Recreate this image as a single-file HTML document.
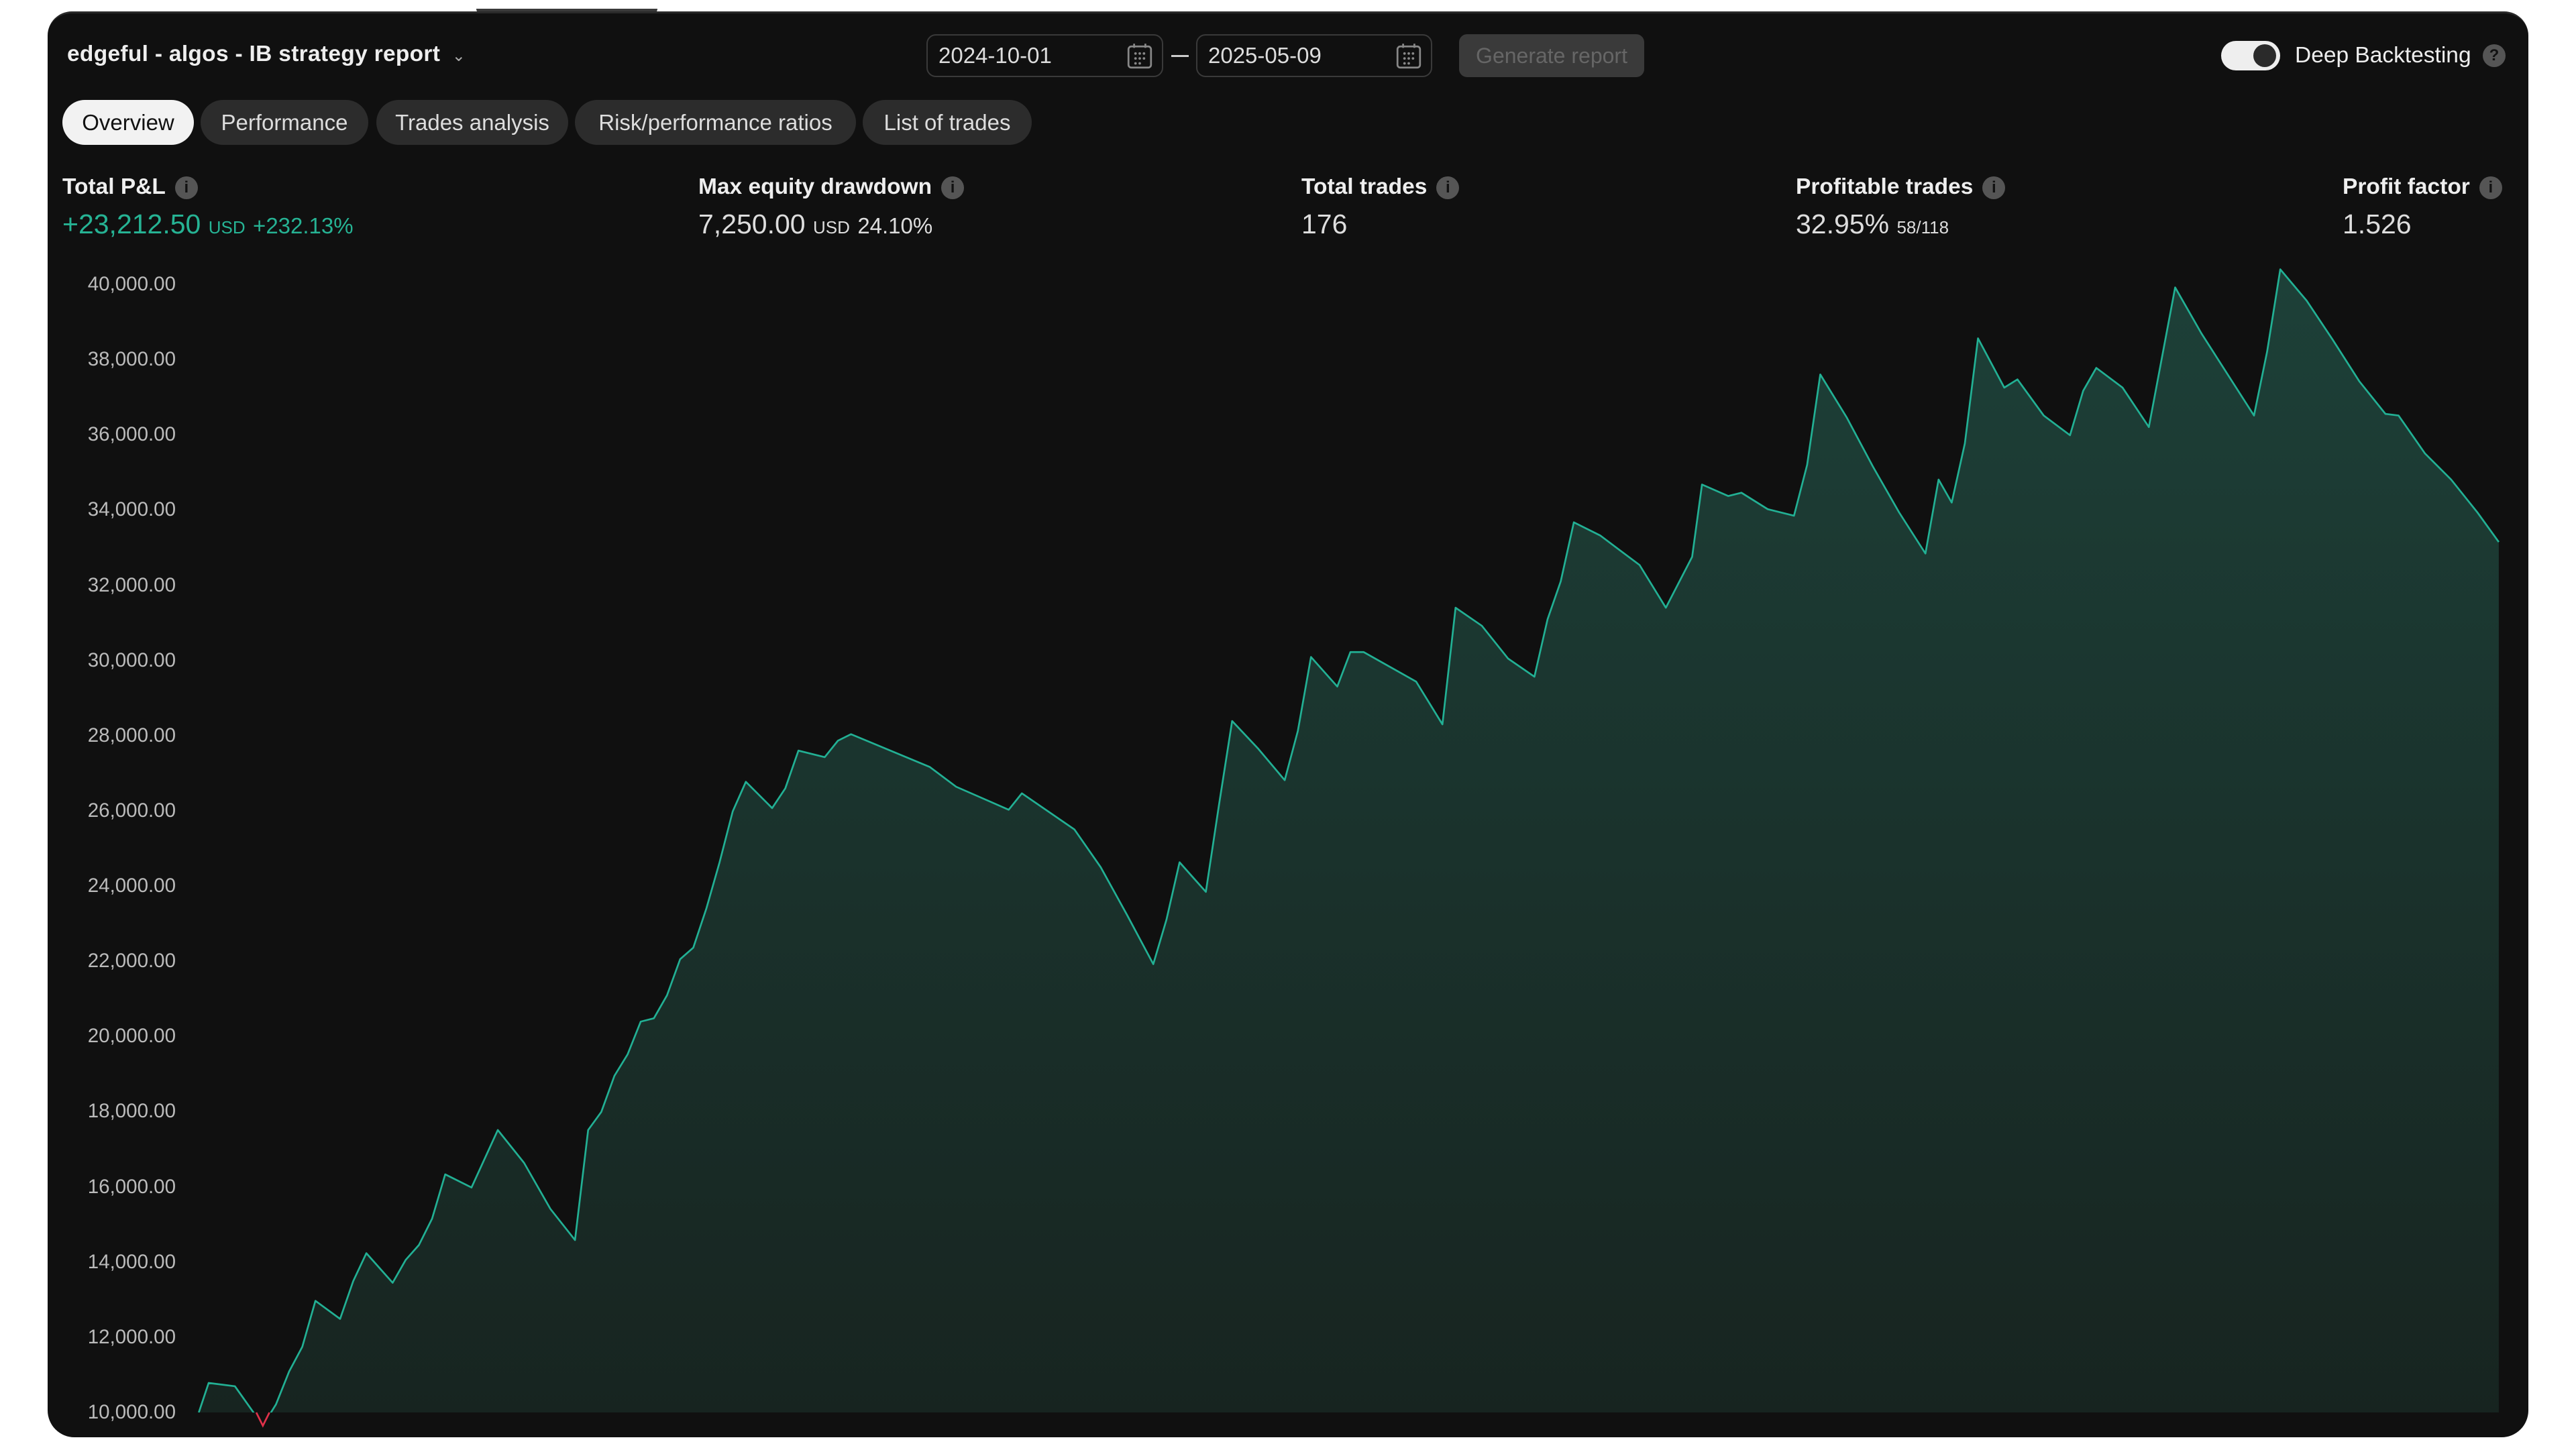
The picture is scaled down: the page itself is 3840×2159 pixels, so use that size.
<!DOCTYPE html>
<html><head><meta charset="utf-8"><style>
*{margin:0;padding:0;box-sizing:border-box}
html,body{width:3840px;height:2159px;background:#fff;overflow:hidden;font-family:"Liberation Sans",sans-serif}
#panel{position:absolute;left:71px;top:17px;width:3698px;height:2126px;background:#101010;border-radius:36px 36px 40px 40px;border-top:3px solid #2a2a2a;overflow:hidden}
.abs{position:absolute}
.title{left:100px;top:62px;font-size:33.5px;font-weight:bold;color:#eee;letter-spacing:0.3px}
.date{height:64px;top:51px;border:2px solid #3a3a3a;border-radius:14px;color:#ddd;font-size:33px;line-height:60px;padding-left:16px}
.gen{left:2175px;top:51px;width:276px;height:64px;background:#3a3a3a;border-radius:12px;color:#666;font-size:32px;line-height:64px;text-align:center}
.tab{top:149px;height:67px;border-radius:34px;background:#2c2c2c;color:#ddd;font-size:33px;line-height:67px;text-align:center}
.lbl{top:260px;font-size:33.5px;font-weight:bold;color:#eee;white-space:nowrap}
.val{top:311px;font-size:41px;color:#ddd;white-space:nowrap}
.small{font-size:26px}
.info{display:inline-block;width:34px;height:34px;border-radius:50%;background:#555;color:#111;font-size:24px;font-weight:bold;text-align:center;line-height:34px;vertical-align:2px;margin-left:14px}
.ax{left:50px;width:212px;text-align:right;font-size:29.5px;color:#bbb}
</style></head><body>
<div class="abs" style="left:710px;top:13px;width:270px;height:8px;background:#3a3a3a;border-radius:0 0 8px 8px"></div>
<div id="panel"></div>
<svg class="abs" style="left:0;top:0" width="3840" height="2159" viewBox="0 0 1568 881.6" preserveAspectRatio="none">
<defs><linearGradient id="g" x1="0" y1="0" x2="0" y2="1"><stop offset="0" stop-color="#1d4038"/><stop offset="1" stop-color="#172420"/></linearGradient>
<clipPath id="c"><rect x="0" y="0" width="1568" height="860"/></clipPath></defs>
<polygon clip-path="url(#c)" fill="url(#g)" points="121,860 127,842 143,844 160,868 168,855 176,835 184,820 192,792 207,803 215,780 223,763 239,781 247,767 255,758 263,742 271,715 287,723 303,688 319,708 335,736 350,755 358,688 366,677 374,655 382,642 390,622 398,620 406,606 414,584 422,577 430,553 438,525 446,494 454,476 470,492 478,480 486,457 502,461 510,451 518,447 566,467 582,479 598,486 614,493 622,483 654,505 670,528 686,557 702,587 710,560 718,525 734,543 742,490 750,439 766,456 782,475 790,445 798,400 814,418 822,397 830,397 862,415 878,441 886,370 902,381 918,401 934,412 942,377 950,354 958,318 974,326 998,344 1014,370 1030,339 1036,295 1052,302 1060,300 1076,310 1092,314 1100,283 1108,228 1124,254 1140,284 1156,312 1172,337 1180,292 1188,306 1196,270 1204,206 1220,236 1228,231 1244,253 1260,265 1268,238 1276,224 1292,236 1308,260 1324,175 1340,203 1372,253 1380,214 1388,164 1404,183 1420,207 1436,232 1452,252 1460,253 1476,276 1492,292 1508,312 1521,330 1521,860"/>
<polyline fill="none" stroke="#22b094" stroke-width="1.1" stroke-linejoin="round" clip-path="url(#c)" points="121,860 127,842 143,844 160,868 168,855 176,835 184,820 192,792 207,803 215,780 223,763 239,781 247,767 255,758 263,742 271,715 287,723 303,688 319,708 335,736 350,755 358,688 366,677 374,655 382,642 390,622 398,620 406,606 414,584 422,577 430,553 438,525 446,494 454,476 470,492 478,480 486,457 502,461 510,451 518,447 566,467 582,479 598,486 614,493 622,483 654,505 670,528 686,557 702,587 710,560 718,525 734,543 742,490 750,439 766,456 782,475 790,445 798,400 814,418 822,397 830,397 862,415 878,441 886,370 902,381 918,401 934,412 942,377 950,354 958,318 974,326 998,344 1014,370 1030,339 1036,295 1052,302 1060,300 1076,310 1092,314 1100,283 1108,228 1124,254 1140,284 1156,312 1172,337 1180,292 1188,306 1196,270 1204,206 1220,236 1228,231 1244,253 1260,265 1268,238 1276,224 1292,236 1308,260 1324,175 1340,203 1372,253 1380,214 1388,164 1404,183 1420,207 1436,232 1452,252 1460,253 1476,276 1492,292 1508,312 1521,330"/>
<polyline fill="none" stroke="#e0314a" stroke-width="1.1" points="156,860 160,868 164,860"/>
</svg>
<div class="abs title">edgeful - algos - IB strategy report <span style="font-weight:normal;font-size:24px;color:#aaa;margin-left:8px">⌄</span></div>
<div class="abs date" style="left:1381px;width:353px">2024-10-01
<svg class="abs" style="right:12px;top:10px" width="42" height="42" viewBox="0 0 20 20" fill="none" stroke="#888" stroke-width="1.3"><rect x="2" y="3" width="16" height="15" rx="2"/><path d="M6 1v3M14 1v3"/><g fill="#888" stroke="none"><circle cx="7" cy="8" r=".9"/><circle cx="10" cy="8" r=".9"/><circle cx="13" cy="8" r=".9"/><circle cx="7" cy="11.5" r=".9"/><circle cx="10" cy="11.5" r=".9"/><circle cx="13" cy="11.5" r=".9"/><circle cx="7" cy="15" r=".9"/><circle cx="10" cy="15" r=".9"/></g></svg></div>
<div class="abs" style="left:1746px;top:82px;width:26px;height:3px;background:#ccc"></div>
<div class="abs date" style="left:1783px;width:352px">2025-05-09
<svg class="abs" style="right:12px;top:10px" width="42" height="42" viewBox="0 0 20 20" fill="none" stroke="#888" stroke-width="1.3"><rect x="2" y="3" width="16" height="15" rx="2"/><path d="M6 1v3M14 1v3"/><g fill="#888" stroke="none"><circle cx="7" cy="8" r=".9"/><circle cx="10" cy="8" r=".9"/><circle cx="13" cy="8" r=".9"/><circle cx="7" cy="11.5" r=".9"/><circle cx="10" cy="11.5" r=".9"/><circle cx="13" cy="11.5" r=".9"/><circle cx="7" cy="15" r=".9"/><circle cx="10" cy="15" r=".9"/></g></svg></div>
<div class="abs gen">Generate report</div>
<div class="abs" style="left:3311px;top:61px;width:88px;height:44px;border-radius:22px;background:#eee"><div class="abs" style="right:6px;top:5px;width:34px;height:34px;border-radius:50%;background:#2a2a2a"></div></div>
<div class="abs" style="left:3421px;top:64px;font-size:33.5px;color:#eee">Deep Backtesting</div>
<div class="abs info" style="left:3701px;top:66px;margin:0">?</div>
<div class="abs tab" style="left:93px;width:196px;background:#f2f2f2;color:#111">Overview</div>
<div class="abs tab" style="left:299px;width:250px">Performance</div>
<div class="abs tab" style="left:561px;width:286px">Trades analysis</div>
<div class="abs tab" style="left:857px;width:419px">Risk/performance ratios</div>
<div class="abs tab" style="left:1286px;width:252px">List of trades</div>
<div class="abs lbl" style="left:93px">Total P&amp;L<span class="info">i</span></div>
<div class="abs val" style="left:93px;color:#26b394">+23,212.50 <span class="small">USD</span> <span style="font-size:33px">+232.13%</span></div>
<div class="abs lbl" style="left:1041px">Max equity drawdown<span class="info">i</span></div>
<div class="abs val" style="left:1041px">7,250.00 <span class="small">USD</span> <span style="font-size:33px">24.10%</span></div>
<div class="abs lbl" style="left:1940px">Total trades<span class="info">i</span></div>
<div class="abs val" style="left:1940px">176</div>
<div class="abs lbl" style="left:2677px">Profitable trades<span class="info">i</span></div>
<div class="abs val" style="left:2677px">32.95% <span class="small">58/118</span></div>
<div class="abs lbl" style="left:3492px">Profit factor<span class="info">i</span></div>
<div class="abs val" style="left:3492px">1.526</div>
<div class="abs ax" style="top:407px">40,000.00</div>
<div class="abs ax" style="top:519px">38,000.00</div>
<div class="abs ax" style="top:631px">36,000.00</div>
<div class="abs ax" style="top:743px">34,000.00</div>
<div class="abs ax" style="top:856px">32,000.00</div>
<div class="abs ax" style="top:968px">30,000.00</div>
<div class="abs ax" style="top:1080px">28,000.00</div>
<div class="abs ax" style="top:1192px">26,000.00</div>
<div class="abs ax" style="top:1304px">24,000.00</div>
<div class="abs ax" style="top:1416px">22,000.00</div>
<div class="abs ax" style="top:1528px">20,000.00</div>
<div class="abs ax" style="top:1640px">18,000.00</div>
<div class="abs ax" style="top:1753px">16,000.00</div>
<div class="abs ax" style="top:1865px">14,000.00</div>
<div class="abs ax" style="top:1977px">12,000.00</div>
<div class="abs ax" style="top:2089px">10,000.00</div>
</body></html>
